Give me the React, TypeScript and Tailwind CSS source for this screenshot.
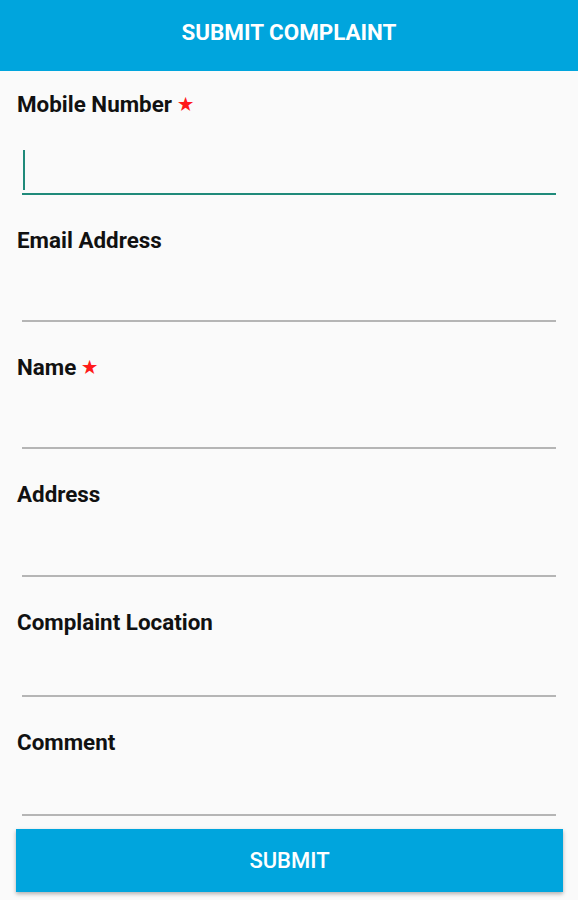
import React from 'react';

interface FieldProps {
  label: string;
  required?: boolean;
  inputHeight: string;
  focused?: boolean;
}

const Field: React.FC<FieldProps> = ({ label, required, inputHeight, focused }) => {
  return (
    <div className="pt-[33px]">
      <div className="pl-[17px] flex items-center h-6 text-[22.4px] font-bold text-[#111] leading-6">
        <span>{label}</span>
        {required && <span className="ml-[6px] text-[17px] text-[#ff1a1a]">★</span>}
      </div>
      <div
        className={`mx-[22px] ${inputHeight} relative border-b-2 ${
          focused ? 'border-[#1f8a7a]' : 'border-[#b5b5b5]'
        }`}
      >
        {/* caret */}
        {focused && <div className="absolute left-[1px] bottom-[3px] w-[2px] h-[40px] bg-[#1f8a7a]" />}
      </div>
    </div>
  );
};

const App: React.FC = () => {
  return (
    <div className="w-[578px] h-[900px] bg-[#fafafa] overflow-hidden" style={{ fontFamily: 'Roboto, "Liberation Sans", sans-serif' }}>
      {/* Header */}
      <div className="h-[71px] bg-[#00a5dd] flex items-center justify-center pb-[6px]">
        <span className="text-white text-[22.4px] font-bold">SUBMIT COMPLAINT</span>
      </div>

      <div className="-mt-[12px]">
        <Field label="Mobile Number" required inputHeight="h-[79px]" focused />
        <Field label="Email Address" inputHeight="h-[70px]" />
        <Field label="Name" required inputHeight="h-[70px]" />
        <Field label="Address" inputHeight="h-[71px]" />
        <Field label="Complaint Location" inputHeight="h-[63px]" />
        <Field label="Comment" inputHeight="h-[62px]" />
      </div>

      {/* Submit */}
      <div className="pt-[13px] pl-[16px] pr-[15px]">
        <button className="w-full h-[63px] bg-[#00a5dd] text-white text-[22px] font-medium shadow-[0_2px_4px_rgba(0,0,0,0.3)]">
          SUBMIT
        </button>
      </div>
    </div>
  );
};

export default App;
